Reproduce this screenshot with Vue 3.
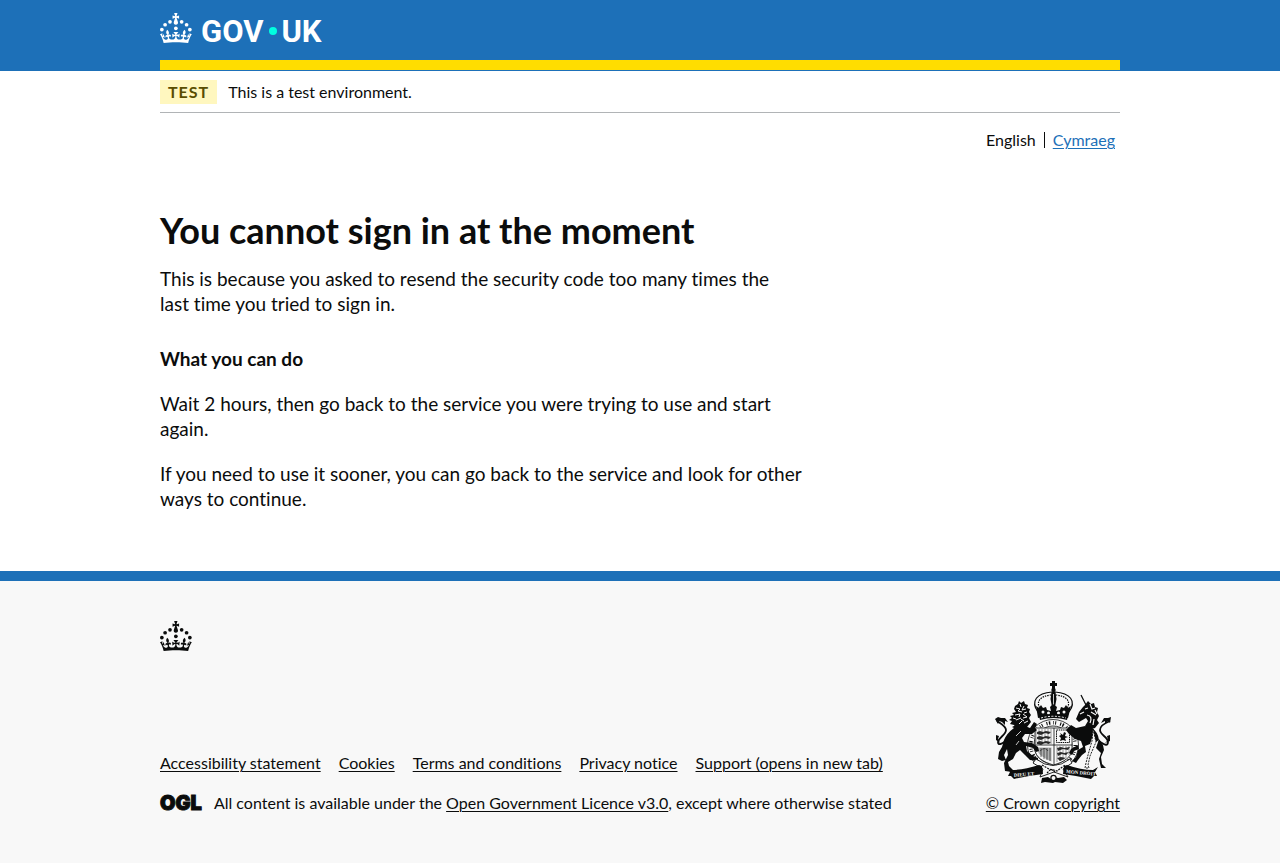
<script setup>
const crown =
  'M33.1,9.8c.2-.1.3-.3.5-.5l4.6,2.4v-6.8l-4.6,1.5c-.1-.2-.3-.3-.5-.5l1.9-5.9h-6.7l1.9,5.9c-.2.1-.3.3-.5.5l-4.6-1.5v6.8l4.6-2.4c.1.2.3.3.5.5l-2.6,8c-.9,2.8,1.2,5.7,4.1,5.7h0c3,0,5.1-2.9,4.1-5.7l-2.6-8ZM37,37.9s-3.4,3.8-4.1,6.1c2.2,0,4.2-.5,6.4-2.8l-.7,8.5c-2-2.8-4.4-4.1-5.7-3.8.1,3.1.5,6.7,5.8,7.2,3.7.3,6.7-1.5,7-3.8.4-2.6-2-4.3-3.7-1.6-1.4-4.5,2.4-6.1,4.9-3.2-1.9-4.5-1.8-7.7,2.4-10.9,3,4,2.6,7.3-1.2,11.1,2.4-1.3,6.2,0,4,4.6-1.2-2.8-3.7-2.2-4.2.2-.3,1.7.7,3.7,3,4.2,1.9.3,4.7-.9,7-5.9-1.3,0-2.4.7-3.9,1.7l2.4-8c.6,2.3,1.4,3.7,2.2,4.5.6-1.6.5-2.8,0-5.3l5,1.8c-2.6,3.6-5.2,8.7-7.3,17.5-7.4-1.1-15.7-1.7-24.5-1.7h0c-8.8,0-17.1.6-24.5,1.7-2.1-8.9-4.7-13.9-7.3-17.5l5-1.8c-.5,2.5-.6,3.7,0,5.3.8-.8,1.6-2.3,2.2-4.5l2.4,8c-1.5-1-2.6-1.7-3.9-1.7,2.3,5,5.2,6.2,7,5.9,2.3-.4,3.3-2.4,3-4.2-.5-2.4-3-3.1-4.2-.2-2.2-4.6,1.6-6,4-4.6-3.7-3.7-4.2-7.1-1.2-11.1,4.2,3.2,4.3,6.4,2.4,10.9,2.5-2.8,6.3-1.3,4.9,3.2-1.8-2.7-4.1-1-3.7,1.6.3,2.3,3.3,4.1,7,3.8,5.4-.5,5.7-4.2,5.8-7.2-1.3-.2-3.7,1-5.7,3.8l-.7-8.5c2.2,2.3,4.2,2.7,6.4,2.8-.7-2.3-4.1-6.1-4.1-6.1h10.6,0Z'
const jewels = [
  [20, 17.6],
  [10.2, 23.5],
  [3.7, 33.2],
  [31.7, 30.6],
  [43.3, 17.6],
  [53.2, 23.5],
  [59.7, 33.2],
]
const footerLinks = [
  'Accessibility statement',
  'Cookies',
  'Terms and conditions',
  'Privacy notice',
  'Support (opens in new tab)',
]
</script>

<template>
  <div class="page">
    <header class="header">
      <div class="container header-inner">
        <a class="logo" href="#" aria-label="GOV.UK">
          <svg width="32" height="30" viewBox="0 0 64 60" fill="currentColor" aria-hidden="true">
            <circle v-for="(j, i) in jewels" :key="i" :cx="j[0]" :cy="j[1]" r="3.7" />
            <path :d="crown" />
          </svg>
          <span class="wordmark">GOV<i class="dot"></i>UK</span>
        </a>
      </div>
    </header>

    <div class="container">
      <div class="phase">
        <strong class="tag">TEST</strong>
        <span>This is a test environment.</span>
      </div>
      <nav class="languages" aria-label="Language">
        <span class="current">English</span>
        <a href="#">Cymraeg</a>
      </nav>
      <main class="main">
        <h1>You cannot sign in at the moment</h1>
        <p>This is because you asked to resend the security code too many times the last time you tried to sign in.</p>
        <h2>What you can do</h2>
        <p>Wait 2 hours, then go back to the service you were trying to use and start again.</p>
        <p>If you need to use it sooner, you can go back to the service and look for other ways to continue.</p>
      </main>
    </div>

    <footer class="footer">
      <div class="container">
        <svg class="footer-crown" width="32" height="30" viewBox="0 0 64 60" fill="currentColor" aria-hidden="true">
          <circle v-for="(j, i) in jewels" :key="i" :cx="j[0]" :cy="j[1]" r="3.7" />
          <path :d="crown" />
        </svg>
        <div class="footer-row">
          <div class="footer-meta">
            <ul class="links">
              <li v-for="l in footerLinks" :key="l"><a href="#">{{ l }}</a></li>
            </ul>
            <div class="licence">
              <span class="ogl">OGL</span>
              <span>All content is available under the <a href="#">Open Government Licence v3.0</a>, except where otherwise stated</span>
            </div>
          </div>
          <div class="copyright">
            <svg width="125" height="102" viewBox="0 0 125 102" fill="currentColor" aria-hidden="true">
              <!-- royal crown -->
              <path d="M62 0h3v2h2v3h-2v3h-3V5h-2V2h2z" />
              <circle cx="63.500" cy="9" r="2.200" />
              <path d="M48 31C40 20 47 12 62 11M79 31C87 20 80 12 65 11" fill="none" stroke="currentColor" stroke-width="1.200" />
              <path d="M51 29C45 21 50 15 61 14M76 29C82 21 77 15 66 14" fill="none" stroke="currentColor" stroke-width="1.200" stroke-dasharray="1.500 1" />
              <path d="M61.500 11h4l1 7-1.500 8h-3l-1.500-8z" />
              <path d="M63.500 13v11" stroke="#f8f8f8" stroke-width=".8" />
              <path d="M46 25l3 2 2-3 2 3 3-1 1 3 4 1-1-4 3-3 4 3-1 4 4-1 1-3 3 1 2-3 2 3 3-2-3 12q-15-4-30 0z" />
              <g fill="#f8f8f8">
                <circle cx="53" cy="31" r="1.500" /><circle cx="58.500" cy="32" r="1.500" />
                <circle cx="68.500" cy="32" r="1.500" /><circle cx="74" cy="31" r="1.500" />
              </g>
              <path d="M49 35q14.500-4 29 0l-1 4q-13.500-4-27 0z" />
              <path d="M51 37q12.500-3.500 25 0" fill="none" stroke="#f8f8f8" stroke-dasharray="2 1.500" />
              <!-- garter and shield -->
              <circle cx="63" cy="64" r="25.500" fill="#f8f8f8" stroke="currentColor" stroke-width=".8" />
              <circle cx="63" cy="64" r="22.200" fill="none" stroke="currentColor" stroke-width="3.400" stroke-dasharray="1 1.400 1.500 3 .7 1.300 1 4" />
              <circle cx="63" cy="64" r="19" fill="#f8f8f8" stroke="currentColor" stroke-width=".8" />
              <path d="M45 47h37v21c0 8-8 13-18.500 16C53 81 45 76 45 68z" fill="#f8f8f8" stroke="currentColor" stroke-width=".8" />
              <path d="M64 47v37M45 64h37" stroke="currentColor" stroke-width=".8" />
              <path d="M47 51l3-1 3 1 3-1 5 1-2 2-4-1-4 2-4-1zM47 56l3-1 3 1 3-1 5 1-2 2-4-1-4 2-4-1zM47 61l3-1 3 1 3-1 5 1-2 2-4-1-4 2-4-1zM67 67l4-1 3 1 6-1-2 3-5-1-5 2zM67 72l4-1 3 1 5-1-3 3-4-1-4 2zM67 77l4-1 5 1-6 3z" opacity=".85" />
              <path d="M46 49v14M49 48v15M52 48v15M55 48v15M58 48v15M61 48v15M67 65v16M70 65v15M73 65v14M76 65v12M79 65v9" stroke="currentColor" stroke-width=".4" />
              <rect x="66.500" y="49" width="13" height="12.500" fill="none" stroke="currentColor" stroke-width="1" stroke-dasharray="1.500 .7" />
              <path d="M70 52l3 2 1-3 2 1-1 3 3 1-3 1 1 3-3-1-3 1 1-3-2-2 2-1z" />
              <path d="M47.500 66.500h14v14Q49 75 47.500 70z" opacity=".3" />
              <path d="M51 67v9M54 67v11M57 67v12M60 67v13M50 70q5-5 8 0" fill="none" stroke="currentColor" stroke-width=".6" />
              <!-- lion -->
              <path d="M25 25l3-2 1-3 2 2 3-2 1 3 3 1-1 3 3 1-1 3 2 3-2 3 2 4-4 5-2 4-5-1-4-2-2-3-4-1 2-3-3-1 3-2-2-2 4-1-2-2 4-1-2-3z" />
              <path d="M26 27l4 1-2 2 4 1M34 25l-2 4 4-1M25 34l5-1-1 3M33 33l4 3-4 1M26 39l5-2M34 42l4-2M29 43l3-3M37 31l-3 1M23 37l3 1M31 38l3 2M30 23l1 3" fill="none" stroke="#f8f8f8" stroke-width="1" />
              <path d="M22 46q6-4 13-1l5 2 4-6 3 2-2 4 2 2-5 4-7 0-3 4 2 4 8 1 6 4 1 4-3 1-3-4-7-2 1 5 6 5 5 2v3l-8-1-5-5-5-5-4 3-3 6-5 3 1 4 4 4-1 2-7-1-1-8 4-8-1-6-3 6 2 5-4 1-4-2 1-7 3-5 2-7q3-7 10-12z" />
              <path d="M31 50l-5 5M29 60l-3 4" stroke="#f8f8f8" stroke-width=".8" />
              <path d="M17 59q-9 7-9 2c1-5 8-7 8-12 0-4-5-6-9-9" fill="none" stroke="currentColor" stroke-width="1.800" />
              <path d="M8 36l3 1 4 0 3 4-3-1 0 4-3-3-3-1-1 3-3-5zM6 54l3 1-1 3 2 4-4-3z" />
              <!-- unicorn -->
              <path d="M91 14l6 12" stroke="currentColor" stroke-width="1.200" />
              <path d="M95 24l3-4 3 3 3-1 1 4 3 1-1 4 2 4-2 4 2 3-4 5-6 2-4-4 3-5-2-3-7 4-3-3 3-7 4-5z" />
              <path d="M95 28l3-1M100 23l2 5 3-1M101 31l5 3M97 34q6 1 3 8M104 38l-1 6M90 33l4-2M105 29l2 4" fill="none" stroke="#f8f8f8" stroke-width="1.200" />
              <path d="M81 44l5 3 9-2 7 2q6 4 7 12l-3 2-4-4-2 6-5 2 1 6-4 3-4 5-2 3-4-2 4-4 2-7 5-3-2-6-6-2-6-5-3-4z" />
              <path d="M88 64l-7 4-2 4 3 2 2-4 5-2zM109 58l4 6 1 5-3 7 1 7 4 4-5 0-2-9 2-6-5-5z" />
              <path d="M103 48l3 13-6 14-2 9 1 3h-4l1-5 2-8 4-14z" fill="#f8f8f8" stroke="currentColor" stroke-width=".9" stroke-dasharray="2 1" />
              <path d="M109 60q9 7 9 1c0-5-8-7-8-12 0-4 5-7 10-9" fill="none" stroke="currentColor" stroke-width="1.800" />
              <path d="M121 36l-3 1-4 0-3 5 4-2 0 3 3-3 2 2zM120 54l-3 1 1 4-3 3 5-2z" />
              <!-- motto scrolls and compartment -->
              <path d="M46 78q17 13 34 0l2 4-9 6 5 8-14-5-14 5 3-8-10-6z" fill="#f8f8f8" stroke="currentColor" stroke-width=".9" />
              <path d="M52 84l7 4 8 2 8-6M57 92l4-4 4 3" fill="none" stroke="currentColor" stroke-width="1.200" stroke-dasharray="2 1" />
              <path d="M17 86l5 3q12 0 27-5l3 1 1 8q-16 2-29 5l-3-3h-3l2-4zM108 86l-5 3q-12 0-26-5l-3 1-1 8q15 2 28 5l3-3h3l-2-4z" />
              <text class="motto" x="24" y="96" transform="rotate(-5 24 96)">DIEU ET</text>
              <text class="motto" x="76" y="92" transform="rotate(5 76 92)">MON DROIT</text>
              <path d="M52 97l6-1 3 2 3-2 4 1 6-1 3 3-4 3-8-1-2 1-8-1-4 1z" />
              <circle cx="63.500" cy="97" r="2.600" fill="#f8f8f8" stroke="currentColor" stroke-width="1.200" />
            </svg>
            <a href="#">© Crown copyright</a>
          </div>
        </div>
      </div>
    </footer>
  </div>
</template>

<style>
body {
  margin: 0;
  background: #f8f8f8;
}
</style>

<style scoped>
.page {
  background: #fff;
  color: #0b0c0c;
  font-family: Lato, "Liberation Sans", sans-serif;
  font-size: 16px;
  line-height: 20px;
  font-variant-ligatures: none;
}
.container {
  max-width: 960px;
  margin: 0 auto;
}
.header {
  background: #1d70b8;
  padding-bottom: 1px;
}
.header-inner {
  padding-top: 13px;
  border-bottom: 10px solid #ffdd00;
}
.logo {
  display: flex;
  gap: 9px;
  height: 47px;
  color: #fff;
  text-decoration: none;
}
.footer-crown,
.copyright svg {
  display: block;
}
.wordmark {
  display: flex;
  font-family: Roboto, sans-serif;
  font-size: 31px;
  font-weight: 700;
  line-height: 38px;
}
.dot {
  width: 8px;
  height: 8px;
  margin: 14px 4px 0 6px;
  border-radius: 50%;
  background: #00ffe0;
}
.phase {
  display: flex;
  align-items: center;
  gap: 11px;
  padding: 9px 0 8px;
  border-bottom: 1px solid #b1b4b6;
}
.tag {
  padding: 2px 8px;
  background: #fff7bf;
  color: #594d00;
  letter-spacing: 1px;
}
.languages {
  display: flex;
  justify-content: flex-end;
  align-items: center;
  margin-top: 17px;
  padding-right: 5px;
}
.current {
  line-height: 16px;
  padding-right: 8px;
  margin-right: 8px;
  border-right: 1px solid #0b0c0c;
}
a {
  color: inherit;
  text-decoration: underline;
  text-decoration-thickness: 1px;
  text-underline-offset: 2px;
}
.languages a {
  color: #1d70b8;
}
.main {
  max-width: 642px;
  padding: 60px 0;
}
h1 {
  margin: 0 0 16px;
  font-size: 36px;
  line-height: 40px;
}
h2,
p {
  margin: 0 0 20px;
  font-size: 19px;
  line-height: 25px;
}
h2 {
  margin-top: 30px;
}
p:last-child {
  margin-bottom: 0;
}
.footer {
  border-top: 10px solid #1d70b8;
  background: #f8f8f8;
  padding: 40px 0 50px;
}
.footer-row {
  display: flex;
  justify-content: space-between;
  align-items: flex-end;
  margin-top: 30px;
}
.links {
  display: flex;
  gap: 18px;
  margin: 0 0 20px;
  padding: 0;
  list-style: none;
}
.licence {
  display: flex;
  align-items: center;
  gap: 12px;
}
.ogl {
  font-family: Inter, sans-serif;
  font-size: 20px;
  font-weight: 900;
  -webkit-text-stroke: 1px currentColor;
}
.copyright {
  display: flex;
  flex-direction: column;
  align-items: center;
  gap: 10px;
}
.motto {
  font-family: "Liberation Serif", serif;
  font-size: 5px;
  font-weight: 700;
  fill: #f8f8f8;
}
</style>
